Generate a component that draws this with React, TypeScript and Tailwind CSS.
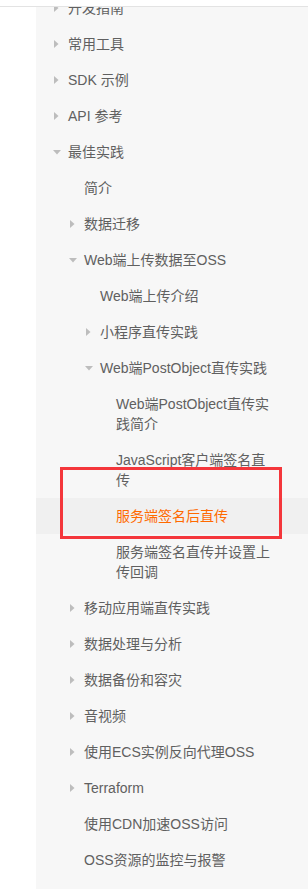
type Item = {
    label: string;
    level: 1 | 2 | 3 | 4;
    arrow?: 'right' | 'down';
    active?: boolean;
};

const items: Item[] = [
    { label: '开发指南', level: 1, arrow: 'right' },
    { label: '常用工具', level: 1, arrow: 'right' },
    { label: 'SDK 示例', level: 1, arrow: 'right' },
    { label: 'API 参考', level: 1, arrow: 'right' },
    { label: '最佳实践', level: 1, arrow: 'down' },
    { label: '简介', level: 2 },
    { label: '数据迁移', level: 2, arrow: 'right' },
    { label: 'Web端上传数据至OSS', level: 2, arrow: 'down' },
    { label: 'Web端上传介绍', level: 3 },
    { label: '小程序直传实践', level: 3, arrow: 'right' },
    { label: 'Web端PostObject直传实践', level: 3, arrow: 'down' },
    { label: 'Web端PostObject直传实践简介', level: 4 },
    { label: 'JavaScript客户端签名直传', level: 4 },
    { label: '服务端签名后直传', level: 4, active: true },
    { label: '服务端签名直传并设置上传回调', level: 4 },
    { label: '移动应用端直传实践', level: 2, arrow: 'right' },
    { label: '数据处理与分析', level: 2, arrow: 'right' },
    { label: '数据备份和容灾', level: 2, arrow: 'right' },
    { label: '音视频', level: 2, arrow: 'right' },
    { label: '使用ECS实例反向代理OSS', level: 2, arrow: 'right' },
    { label: 'Terraform', level: 2, arrow: 'right' },
    { label: '使用CDN加速OSS访问', level: 2 },
    { label: 'OSS资源的监控与报警', level: 2 },
];

const indent = {
    1: 'pl-4',
    2: 'pl-8',
    3: 'pl-12',
    4: 'pl-16',
};

const Arrow = ({ dir }: { dir: 'right' | 'down' }) =>
    dir === 'right' ? (
        <svg width="5" height="8" viewBox="0 0 5 8" className="ml-[2px]">
            <path d="M0 0 L4.5 4 L0 8 Z" fill="#bdbdbd" />
        </svg>
    ) : (
        <svg width="8" height="5" viewBox="0 0 8 5" className="ml-[1px]">
            <path d="M0 0 L8 0 L4 4.5 Z" fill="#bdbdbd" />
        </svg>
    );

const App = () => {
    return (
        <div
            className="relative h-[889px] w-[308px] overflow-hidden bg-white"
            style={{ fontFamily: '"Liberation Sans", "Noto Sans CJK SC", sans-serif' }}
        >
            <div className="absolute left-0 right-0 top-0 z-10 h-[7px] border-b border-[#e3e3e3] bg-white" />
            <div className="ml-[36px] min-h-[899px] -mt-[10px] bg-[#f7f7f7] pb-3">
                {items.map((item) => (
                    <div
                        key={item.label}
                        className={`relative flex items-start py-2 pr-9 text-sm leading-5 ${indent[item.level]} ${
                            item.active ? 'bg-[#f0f0f0] text-[#ff6a00]' : 'text-[#606060]'
                        }`}
                    >
                        <div className="flex h-5 w-4 shrink-0 items-center">
                            {item.arrow ? <Arrow dir={item.arrow} /> : null}
                        </div>
                        <span className="break-all">{item.label}</span>
                        {item.active ? (
                            <div className="pointer-events-none absolute -top-[31px] -bottom-[5px] left-[24px] right-[26px] border-[3px] border-[#f4363b]" />
                        ) : null}
                    </div>
                ))}
            </div>
        </div>
    );
};

export default App;
